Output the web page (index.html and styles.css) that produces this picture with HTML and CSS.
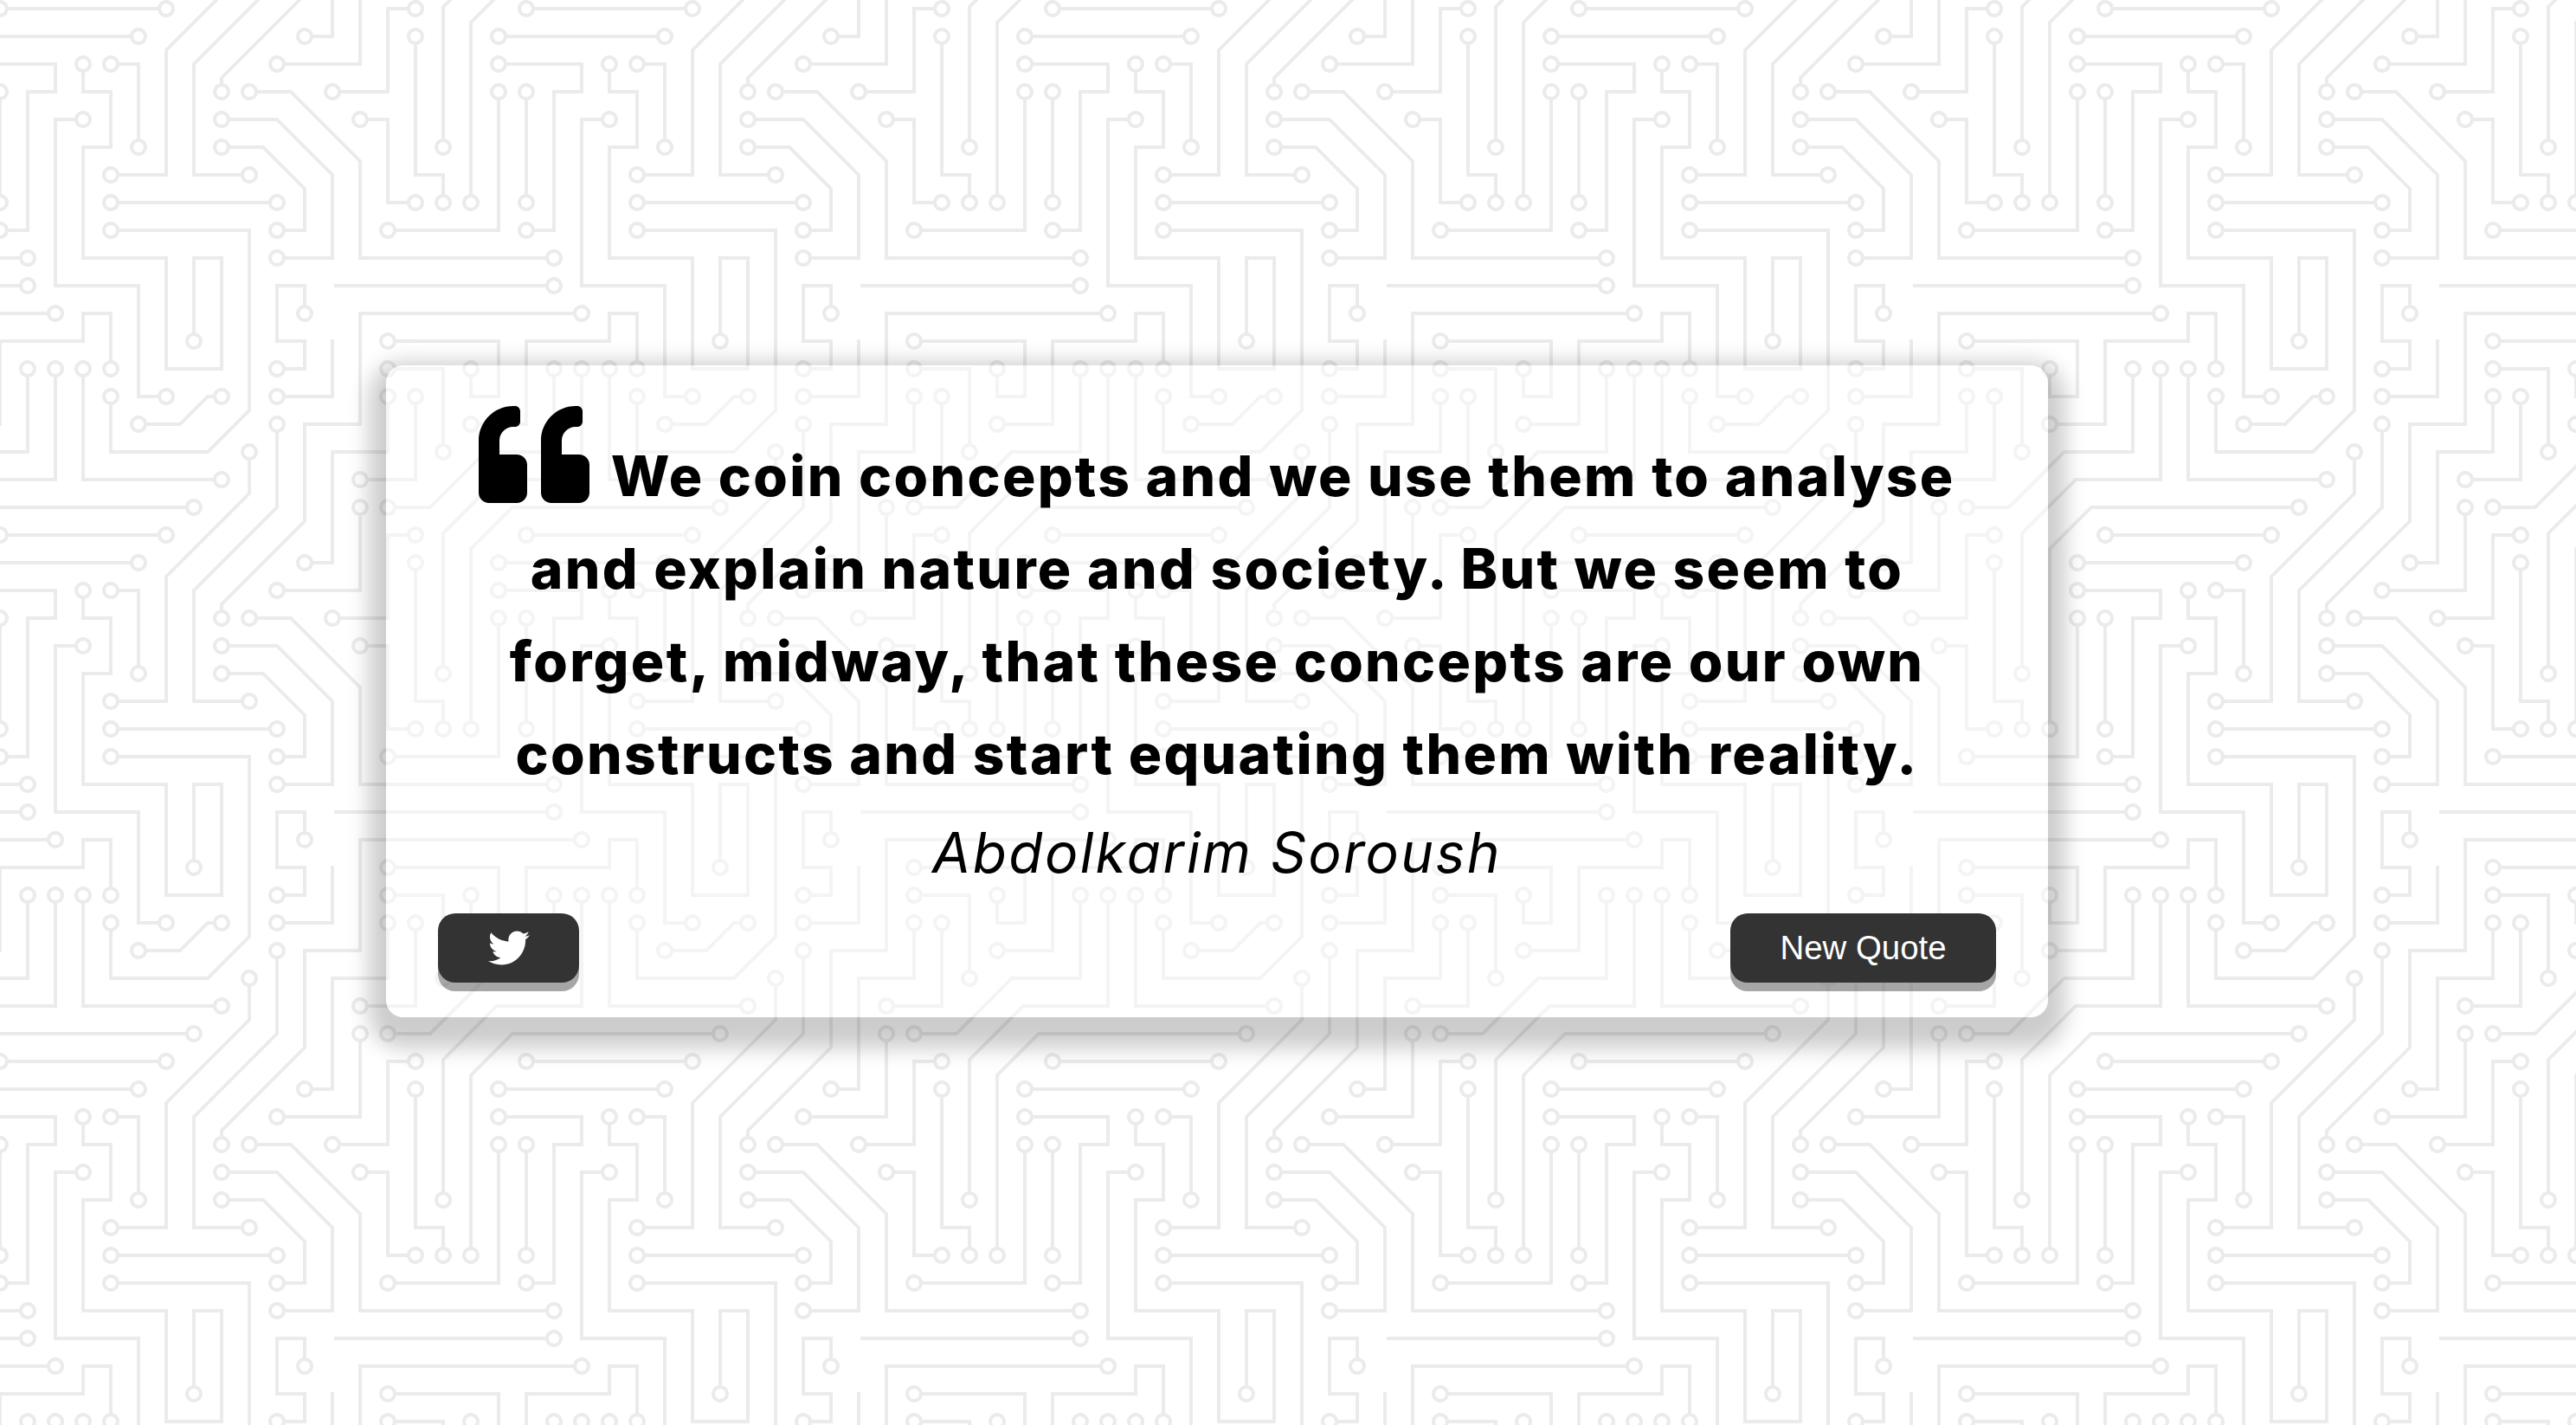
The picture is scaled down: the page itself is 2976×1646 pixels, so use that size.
FILE: index.html
```html
<!DOCTYPE html>
<html lang="en">
<head>
    <meta charset="UTF-8">
    <meta name="viewport" content="width=device-width, initial-scale=1.0">
    <title>Quote Generator</title>
    <link rel="stylesheet" href="styles.css">
</head>
<body>
    <div class="quote-container">
        <div class="quote-text">
            <svg class="quote-icon" viewBox="0 0 512 512" width="128" height="128"><path d="M464 256h-80v-64c0-35.3 28.7-64 64-64h8c13.3 0 24-10.7 24-24V56c0-13.3-10.7-24-24-24h-8c-88.4 0-160 71.6-160 160v240c0 26.5 21.5 48 48 48h128c26.5 0 48-21.5 48-48V304c0-26.5-21.5-48-48-48zm-288 0H96v-64c0-35.3 28.7-64 64-64h8c13.3 0 24-10.7 24-24V56c0-13.3-10.7-24-24-24h-8C71.6 32 0 103.6 0 192v240c0 26.5 21.5 48 48 48h128c26.5 0 48-21.5 48-48V304c0-26.5-21.5-48-48-48z"/></svg>
            <span>We coin concepts and we use them to analyse and explain nature and society. But we seem to forget, midway, that these concepts are our own constructs and start equating them with reality.</span>
        </div>
        <div class="quote-author">Abdolkarim Soroush</div>
        <div class="button-container">
            <button class="twitter-button" title="Tweet this">
                <svg viewBox="0 0 512 512" width="48" height="48"><path fill="#fff" d="M459.37 151.716c.325 4.548.325 9.097.325 13.645 0 138.72-105.583 298.558-298.558 298.558-59.452 0-114.68-17.219-161.137-47.106 8.447.974 16.568 1.299 25.34 1.299 49.055 0 94.213-16.568 130.274-44.832-46.132-.975-84.792-31.188-98.112-72.772 6.498.974 12.995 1.624 19.818 1.624 9.421 0 18.843-1.3 27.614-3.573-48.081-9.747-84.143-51.98-84.143-102.985v-1.299c13.969 7.797 30.214 12.67 47.431 13.319-28.264-18.843-46.781-51.005-46.781-87.391 0-19.492 5.197-37.36 14.294-52.954 51.655 63.675 129.3 105.258 216.365 109.807-1.624-7.797-2.599-15.918-2.599-24.04 0-57.828 46.782-104.934 104.934-104.934 30.213 0 57.502 12.67 76.67 33.137 23.715-4.548 46.456-13.32 66.599-25.34-7.798 24.366-24.366 44.833-46.132 57.827 21.117-2.273 41.584-8.122 60.426-16.243-14.292 20.791-32.161 39.308-52.628 54.253z"/></svg>
            </button>
            <button class="new-quote">New Quote</button>
        </div>
    </div>
</body>
</html>
```

FILE: styles.css
```css
* {
    box-sizing: border-box;
}

html, body {
    height: 100%;
}

body {
    margin: 0;
    padding: 422px 0 0 446px;
    background-color: #fff;
    background-image: url("data:image/svg+xml,%3Csvg xmlns='http://www.w3.org/2000/svg' width='304' height='304' viewBox='0 0 304 304'%3E%3Cpath fill='%23ebebeb' d='M44.1 224a5 5 0 1 1 0 2H0v-2h44.1zm160 48a5 5 0 1 1 0 2H82v-2h122.1zm57.8-46a5 5 0 1 1 0-2H304v2h-42.1zm0 16a5 5 0 1 1 0-2H304v2h-42.1zm6.2-114a5 5 0 1 1 0 2h-86.2a5 5 0 1 1 0-2h86.2zm-256-48a5 5 0 1 1 0 2H0v-2h12.1zm185.8 34a5 5 0 1 1 0-2h86.2a5 5 0 1 1 0 2h-86.2zM258 12.1a5 5 0 1 1-2 0V0h2v12.1zm-64 208a5 5 0 1 1-2 0v-54.2a5 5 0 1 1 2 0v54.2zm48-198.2V80h62v2h-64V21.9a5 5 0 1 1 2 0zm16 16V64h46v2h-48V37.9a5 5 0 1 1 2 0zm-128 96V208h16v12.1a5 5 0 1 1-2 0V210h-16v-76.1a5 5 0 1 1 2 0zm-5.9-21.9a5 5 0 1 1 0 2H114v48H85.9a5 5 0 1 1 0-2H112v-48h12.1zm-6.2 130a5 5 0 1 1 0-2H176v-74.1a5 5 0 1 1 2 0V242h-60.1zm-16-64a5 5 0 1 1 0-2H114v48h10.1a5 5 0 1 1 0 2H112v-48h-10.1zM66 284.1a5 5 0 1 1-2 0V274H50v30h-2v-32h18v12.1zM236.1 176a5 5 0 1 1 0 2H226v94h48v32h-2v-30h-48v-98h12.1zm25.8-30a5 5 0 1 1 0-2H274v44.1a5 5 0 1 1-2 0V146h-10.1zm-64 96a5 5 0 1 1 0-2H208v-80h16v-14h-42.1a5 5 0 1 1 0-2H226v18h-16v80h-12.1zm86.2-210a5 5 0 1 1 0 2H272V0h2v32h10.1zM98 101.9V146H53.9a5 5 0 1 1 0-2H96v-42.1a5 5 0 1 1 2 0zM53.9 34a5 5 0 1 1 0-2H80V0h2v34H53.9zm60.1 3.9V66H82v64H69.9a5 5 0 1 1 0-2H80V64h32V37.9a5 5 0 1 1 2 0zM101.9 82a5 5 0 1 1 0-2H128V37.9a5 5 0 1 1 2 0V82h-28.1zm16-64a5 5 0 1 1 0-2H146v44.1a5 5 0 1 1-2 0V18h-26.1zm102.2 270a5 5 0 1 1 0 2H98v14h-2v-16h124.1zM242 149.9V160h16v34h-16v62h48v48h-2v-46h-48v-66h16v-30h-16v-12.1a5 5 0 1 1 2 0zM53.9 18a5 5 0 1 1 0-2H64V2H48V0h18v18H53.9zm112 32a5 5 0 1 1 0-2H192V0h50v2h-48v48h-28.1zm-48-48a5 5 0 0 1-9.8-2h2.07a3 3 0 1 0 5.66 0H178v34h-18V21.9a5 5 0 1 1 2 0V32h14V2h-58.1zm0 96a5 5 0 1 1 0-2H137l32-32h39V21.9a5 5 0 1 1 2 0V66h-40.17l-32 32H117.9zm28.1 90.1a5 5 0 1 1-2 0v-76.51L175.59 80H224V21.9a5 5 0 1 1 2 0V82h-49.59L146 112.41v75.69zm16 32a5 5 0 1 1-2 0v-99.51L184.59 96H300.1a5 5 0 0 1 3.9-3.9v2.07a3 3 0 0 0 0 5.66v2.07a5 5 0 0 1-3.9-3.9H185.41L162 121.41v98.69zm-144-64a5 5 0 1 1-2 0v-3.51l48-48V48h32V0h2v50H66v55.41l-48 48v2.69zM50 53.9v43.51l-48 48V208h26.1a5 5 0 1 1 0 2H0v-65.41l48-48V53.9a5 5 0 1 1 2 0zm-16 16V89.41l-34 34v-2.82l32-32V69.9a5 5 0 1 1 2 0zM12.1 32a5 5 0 1 1 0 2H9.41L0 43.41V40.6L8.59 32h3.51zm265.8 18a5 5 0 1 1 0-2h18.69l7.41-7.41v2.82L297.41 50H277.9zm-16 160a5 5 0 1 1 0-2H288v-71.41l16-16v2.82l-14 14V210h-28.1zm-208 32a5 5 0 1 1 0-2H64v-22.59L40.59 194H21.9a5 5 0 1 1 0-2h19.51L66 216.59V242H53.9zm150.2 14a5 5 0 1 1 0 2H96v-56.6L56.6 162H37.9a5 5 0 1 1 0-2h19.5L98 200.6V256h106.1zm-150.2 2a5 5 0 1 1 0-2H80v-46.59L48.59 178H21.9a5 5 0 1 1 0-2h27.51L82 208.59V258H53.9zM34 39.8v1.61L9.41 66H0v-2h8.59L32 40.59V0h2v39.8zM0 256h18v48h-2v-46H2v42H0zM34 241v63h-2v-62H0v-2h34v1zM17 18H0v-2h16V0h2v18h-1zm273-2h14v2h-16V0h2v16zm-32 273v15h-2v-14h-14v14h-2v-16h18v1z'/%3E%3Cg fill='%23fff'%3E%3Ccircle cx='49' cy='225' r='3'/%3E%3Ccircle cx='209' cy='273' r='3'/%3E%3Ccircle cx='257' cy='225' r='3'/%3E%3Ccircle cx='257' cy='241' r='3'/%3E%3Ccircle cx='273' cy='129' r='3'/%3E%3Ccircle cx='177' cy='129' r='3'/%3E%3Ccircle cx='17' cy='81' r='3'/%3E%3Ccircle cx='193' cy='113' r='3'/%3E%3Ccircle cx='289' cy='113' r='3'/%3E%3Ccircle cx='257' cy='17' r='3'/%3E%3Ccircle cx='193' cy='225' r='3'/%3E%3Ccircle cx='193' cy='161' r='3'/%3E%3Ccircle cx='241' cy='17' r='3'/%3E%3Ccircle cx='257' cy='33' r='3'/%3E%3Ccircle cx='129' cy='129' r='3'/%3E%3Ccircle cx='145' cy='225' r='3'/%3E%3Ccircle cx='129' cy='113' r='3'/%3E%3Ccircle cx='81' cy='161' r='3'/%3E%3Ccircle cx='113' cy='241' r='3'/%3E%3Ccircle cx='177' cy='161' r='3'/%3E%3Ccircle cx='97' cy='177' r='3'/%3E%3Ccircle cx='129' cy='225' r='3'/%3E%3Ccircle cx='65' cy='289' r='3'/%3E%3Ccircle cx='241' cy='177' r='3'/%3E%3Ccircle cx='257' cy='145' r='3'/%3E%3Ccircle cx='273' cy='193' r='3'/%3E%3Ccircle cx='193' cy='241' r='3'/%3E%3Ccircle cx='177' cy='145' r='3'/%3E%3Ccircle cx='289' cy='33' r='3'/%3E%3Ccircle cx='97' cy='97' r='3'/%3E%3Ccircle cx='49' cy='145' r='3'/%3E%3Ccircle cx='49' cy='33' r='3'/%3E%3Ccircle cx='113' cy='33' r='3'/%3E%3Ccircle cx='65' cy='129' r='3'/%3E%3Ccircle cx='97' cy='81' r='3'/%3E%3Ccircle cx='129' cy='33' r='3'/%3E%3Ccircle cx='113' cy='17' r='3'/%3E%3Ccircle cx='145' cy='65' r='3'/%3E%3Ccircle cx='225' cy='289' r='3'/%3E%3Ccircle cx='241' cy='145' r='3'/%3E%3Ccircle cx='49' cy='17' r='3'/%3E%3Ccircle cx='161' cy='49' r='3'/%3E%3Ccircle cx='161' cy='17' r='3'/%3E%3Ccircle cx='113' cy='97' r='3'/%3E%3Ccircle cx='209' cy='17' r='3'/%3E%3Ccircle cx='145' cy='193' r='3'/%3E%3Ccircle cx='225' cy='17' r='3'/%3E%3Ccircle cx='161' cy='225' r='3'/%3E%3Ccircle cx='17' cy='161' r='3'/%3E%3Ccircle cx='49' cy='49' r='3'/%3E%3Ccircle cx='33' cy='209' r='3'/%3E%3Ccircle cx='33' cy='65' r='3'/%3E%3Ccircle cx='17' cy='33' r='3'/%3E%3Ccircle cx='273' cy='49' r='3'/%3E%3Ccircle cx='257' cy='209' r='3'/%3E%3Ccircle cx='49' cy='241' r='3'/%3E%3Ccircle cx='17' cy='193' r='3'/%3E%3Ccircle cx='209' cy='257' r='3'/%3E%3Ccircle cx='33' cy='161' r='3'/%3E%3Ccircle cx='49' cy='257' r='3'/%3E%3Ccircle cx='17' cy='177' r='3'/%3E%3C/g%3E%3Cg fill='%23fff' stroke='%23ebebeb' stroke-width='2'%3E%3Ccircle cx='1' cy='97' r='4'/%3E%3Ccircle cx='305' cy='97' r='4'/%3E%3Ccircle cx='113' cy='305' r='4'/%3E%3Ccircle cx='1' cy='1' r='4'/%3E%3Ccircle cx='305' cy='1' r='4'/%3E%3Ccircle cx='1' cy='305' r='4'/%3E%3Ccircle cx='305' cy='305' r='4'/%3E%3C/g%3E%3C/svg%3E");
    background-size: 608px 608px;
    background-position: 222px 392px;
    font-family: "Inter", "Liberation Sans", sans-serif;
    color: #000;
}

.quote-container {
    width: 1920px;
    padding: 39px 60px 40px;
    border-radius: 20px;
    background-color: rgba(255, 255, 255, 0.45);
    box-shadow: 0 16px 24px 20px rgba(0, 0, 0, 0.2);
}

.quote-text {
    font-size: 64px;
    font-weight: 800;
    line-height: 107px;
    text-align: center;
    letter-spacing: 2.35px;
    padding: 0 20px;
}

.quote-icon {
    vertical-align: -0.25em;
    margin-right: 8px;
}

.quote-author {
    margin-top: 21px;
    font-size: 64px;
    font-style: italic;
    line-height: 80px;
    letter-spacing: 2.4px;
    text-align: center;
}

.button-container {
    display: flex;
    justify-content: space-between;
    margin-top: 30px;
}

button {
    height: 80px;
    border: 0;
    border-radius: 20px;
    background-color: #333;
    box-shadow: 0 10px rgba(0, 0, 0, 0.35);
    color: #fff;
    font-family: "Liberation Sans", Arial, sans-serif;
    font-size: 38.4px;
}

.twitter-button {
    display: flex;
    align-items: center;
    justify-content: center;
    width: 163px;
}

.new-quote {
    width: 307px;
}
```
